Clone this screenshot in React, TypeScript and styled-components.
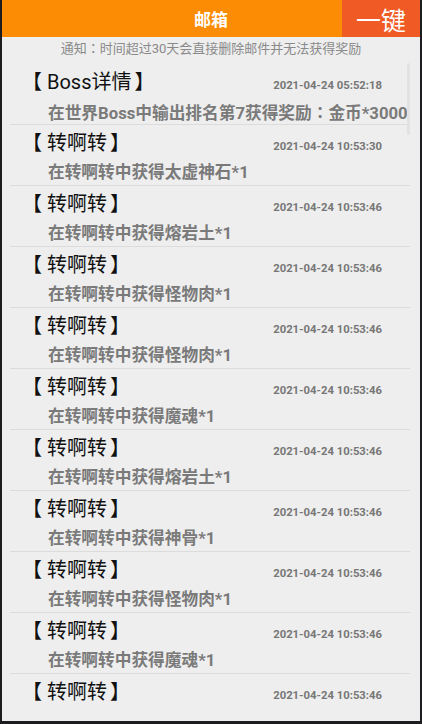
import styled, { createGlobalStyle } from "styled-components";

const GlobalStyle = createGlobalStyle`
    html, body {
        margin: 0;
        padding: 0;
        background: #1d1d1f;
    }
`;

const Frame = styled.div`
    width: 422px;
    height: 724px;
    box-sizing: border-box;
    padding: 0 2px 3px;
    background: #1d1d1f;
    font-family: Roboto, "Noto Sans CJK SC", sans-serif;
`;

const Screen = styled.div`
    height: 100%;
    display: flex;
    flex-direction: column;
    background: #eeeeee;
    overflow: hidden;
    position: relative;
`;

const Header = styled.div`
    height: 37px;
    flex-shrink: 0;
    display: grid;
    grid-template-columns: 78px 1fr 78px;
    background: #fd8c05;
`;

const HeaderTitle = styled.div`
    grid-column: 2;
    display: flex;
    align-items: center;
    justify-content: center;
    color: #fff;
    font-size: 17px;
    font-weight: 700;
`;

const AllButton = styled.button`
    grid-column: 3;
    border: none;
    padding: 0;
    background: #f05a24;
    color: #fff;
    font-family: inherit;
    font-size: 25px;
    cursor: pointer;
`;

const Notice = styled.div`
    height: 21px;
    flex-shrink: 0;
    display: flex;
    align-items: center;
    justify-content: center;
    font-size: 13px;
    color: #8a8a8a;
`;

// centred full-width colon, as on the device
const Colon = styled.span`
    font-family: "Noto Sans CJK TC", sans-serif;
`;

const List = styled.div`
    flex: 1;
    overflow: hidden;
    padding: 6px 10px 0 8px;
    margin-bottom: 9px;
`;

const Item = styled.div`
    height: 61px;
    box-sizing: border-box;
    padding-top: 5px;
    border-bottom: 1px solid #dcdcdc;
`;

const TitleRow = styled.div`
    height: 26px;
    display: flex;
    align-items: baseline;
`;

const MailTitle = styled.div`
    flex: 1;
    padding-left: 10px;
    font-size: 20px;
    line-height: 26px;
    color: #111;
    white-space: nowrap;
`;

const Bracket = styled.span<{ $open?: boolean }>`
    display: inline-block;
    padding: ${props => (props.$open ? "0 5px 0 2px" : "0 0 0 3px")};
`;

const MailDate = styled.div`
    margin-right: 28px;
    font-size: 11.3px;
    font-weight: 700;
    color: #777;
`;

const MailBody = styled.div`
    margin-top: 6px;
    padding-left: 38px;
    line-height: 22px;
    font-size: 16.7px;
    font-weight: 700;
    color: #7a7a7a;
    white-space: nowrap;
`;

const ScrollThumb = styled.div`
    position: absolute;
    top: 63px;
    right: 10px;
    width: 3px;
    height: 72px;
    border-radius: 2px;
    background: #e2e2e2;
`;

interface Mail {
    title: string;
    date: string;
    body: string;
}

const mails: Mail[] = [
    { title: "Boss详情", date: "2021-04-24 05:52:18", body: "在世界Boss中输出排名第7获得奖励：金币*3000" },
    { title: "转啊转", date: "2021-04-24 10:53:30", body: "在转啊转中获得太虚神石*1" },
    { title: "转啊转", date: "2021-04-24 10:53:46", body: "在转啊转中获得熔岩土*1" },
    { title: "转啊转", date: "2021-04-24 10:53:46", body: "在转啊转中获得怪物肉*1" },
    { title: "转啊转", date: "2021-04-24 10:53:46", body: "在转啊转中获得怪物肉*1" },
    { title: "转啊转", date: "2021-04-24 10:53:46", body: "在转啊转中获得魔魂*1" },
    { title: "转啊转", date: "2021-04-24 10:53:46", body: "在转啊转中获得熔岩土*1" },
    { title: "转啊转", date: "2021-04-24 10:53:46", body: "在转啊转中获得神骨*1" },
    { title: "转啊转", date: "2021-04-24 10:53:46", body: "在转啊转中获得怪物肉*1" },
    { title: "转啊转", date: "2021-04-24 10:53:46", body: "在转啊转中获得魔魂*1" },
    { title: "转啊转", date: "2021-04-24 10:53:46", body: "在转啊转中获得熔岩土*1" },
];

function withColon(text: string) {
    const parts = text.split("：");
    return parts.map((p, i) => (
        <span key={i}>
            {p}
            {i < parts.length - 1 && <Colon>：</Colon>}
        </span>
    ));
}

function App() {
    return (
        <>
            <GlobalStyle />
            <Frame>
                <Screen>
                    <Header>
                        <HeaderTitle>邮箱</HeaderTitle>
                        <AllButton>一键</AllButton>
                    </Header>
                    <Notice>{withColon("通知：时间超过30天会直接删除邮件并无法获得奖励")}</Notice>
                    <List>
                        {mails.map((mail, i) => (
                            <Item key={i}>
                                <TitleRow>
                                    <MailTitle>
                                        <Bracket $open>【</Bracket>
                                        {mail.title}
                                        <Bracket>】</Bracket>
                                    </MailTitle>
                                    <MailDate>{mail.date}</MailDate>
                                </TitleRow>
                                <MailBody>{withColon(mail.body)}</MailBody>
                            </Item>
                        ))}
                    </List>
                    <ScrollThumb />
                </Screen>
            </Frame>
        </>
    );
}

export default App;
